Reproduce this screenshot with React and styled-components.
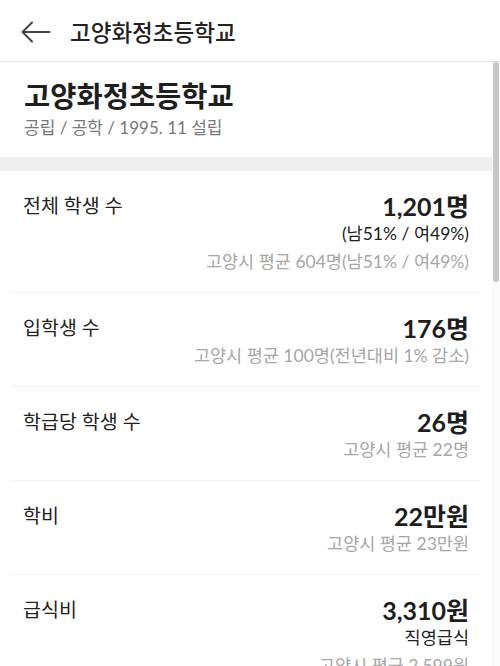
import styled, { createGlobalStyle } from "styled-components"

const GlobalStyle = createGlobalStyle`
    html, body {
        margin: 0;
        padding: 0;
        height: 100%;
        background: #fff;
    }
    body {
        font-family: Lato, "Noto Sans CJK KR", sans-serif;
        color: #222;
    }
    #root {
        height: 100%;
    }
`

const stats = [
    {
        label: "전체 학생 수",
        value: "1,201명",
        sub: "(남51% / 여49%)",
        avg: "고양시 평균 604명(남51% / 여49%)",
    },
    { label: "입학생 수", value: "176명", avg: "고양시 평균 100명(전년대비 1% 감소)" },
    { label: "학급당 학생 수", value: "26명", avg: "고양시 평균 22명" },
    { label: "학비", value: "22만원", avg: "고양시 평균 23만원" },
    { label: "급식비", value: "3,310원", sub: "직영급식", avg: "고양시 평균 2,599원" },
]

const moreStats = [
    { label: "교원 1인당 학생 수", value: "18.2명", avg: "고양시 평균 15.4명" },
    { label: "학급 수", value: "46개", avg: "고양시 평균 27개" },
    { label: "방과후학교 참여율", value: "64%", avg: "고양시 평균 58%" },
    { label: "졸업생 수", value: "198명", avg: "고양시 평균 97명" },
    { label: "교지 면적", value: "12,540㎡", avg: "고양시 평균 10,212㎡" },
    { label: "도서관 장서 수", value: "21,480권", avg: "고양시 평균 15,903권" },
    { label: "돌봄교실 수", value: "4실", avg: "고양시 평균 3실" },
]

const BackIcon = () => (
    <svg width="30" height="22" viewBox="0 0 30 22" fill="none">
        <path
            d="M1.5 11 H28.5 M11 1.5 L1.5 11 L11 20.5"
            stroke="#444"
            strokeWidth="2"
            strokeLinecap="round"
            strokeLinejoin="round"
        />
    </svg>
)

const StatRow = ({ label, value, sub, avg }) => (
    <Row>
        <Label>{label}</Label>
        <Values>
            <Value>{value}</Value>
            {sub && <Sub>{sub}</Sub>}
            <Avg>{avg}</Avg>
        </Values>
    </Row>
)

const App = () => {
    return (
        <Page>
            <GlobalStyle />
            <Header>
                <BackButton>
                    <BackIcon />
                </BackButton>
                <HeaderTitle>고양화정초등학교</HeaderTitle>
            </Header>
            <Body>
                <Scroller>
                    <Intro>
                        <SchoolName>고양화정초등학교</SchoolName>
                        <SchoolMeta>공립 / 공학 / 1995. 11 설립</SchoolMeta>
                    </Intro>
                    <Band />
                    <List>
                        {stats.map(s => (
                            <StatRow key={s.label} {...s} />
                        ))}
                    </List>
                    <Band />
                    <List>
                        {moreStats.map(s => (
                            <StatRow key={s.label} {...s} />
                        ))}
                    </List>
                </Scroller>
                <ScrollTrack>
                    <ScrollThumb />
                </ScrollTrack>
            </Body>
        </Page>
    )
}

const Page = styled.div`
    display: flex;
    flex-direction: column;
    height: 100vh;
    overflow: hidden;
`

const Header = styled.header`
    flex: none;
    display: flex;
    align-items: center;
    height: 61px;
    border-bottom: 1px solid #e2e2e2;
    padding: 0 0 0 21px;
    gap: 19px;
`

const BackButton = styled.button`
    display: flex;
    align-items: center;
    border: none;
    background: none;
    padding: 0;
    margin-top: 2px;
    cursor: pointer;
`

const HeaderTitle = styled.h1`
    margin: 0;
    font-size: 22.5px;
    font-weight: 500;
    color: #222;
`

const Body = styled.div`
    flex: 1;
    display: flex;
    min-height: 0;
`

const Scroller = styled.main`
    flex: 1;
    overflow-y: hidden;
`

const ScrollTrack = styled.div`
    flex: none;
    width: 8px;
    background: #fafafa;
    display: flex;
    flex-direction: column;
`

const ScrollThumb = styled.div`
    height: 220px;
    margin: 0 1px;
    border-radius: 3px;
    background: #c6c6c6;
`

const Intro = styled.section`
    padding: 17px 24px 17px;
`

const SchoolName = styled.h2`
    margin: 0;
    font-size: 28.5px;
    line-height: 34px;
    font-weight: 700;
    color: #1e1e1e;
`

const SchoolMeta = styled.p`
    margin: 3px 0 0;
    font-size: 17px;
    line-height: 24px;
    color: #777;
`

const Band = styled.div`
    height: 14px;
    background: #efefef;
`

const List = styled.div`
    padding: 0 12px;
`

const Row = styled.div`
    display: flex;
    justify-content: space-between;
    align-items: flex-start;
    padding: 20px 11px 17px;
    border-top: 1px solid #f0f0f0;

    &:first-child {
        border-top: none;
    }
`

const Label = styled.div`
    font-size: 19.5px;
    line-height: 30px;
    color: #222;
`

const Values = styled.div`
    display: flex;
    flex-direction: column;
    align-items: flex-end;
    text-align: right;
`

const Value = styled.div`
    font-size: 25px;
    line-height: 30px;
    font-weight: 700;
    color: #1e1e1e;
`

const Sub = styled.div`
    font-size: 17.5px;
    line-height: 26px;
    margin-bottom: 2px;
    color: #222;
`

const Avg = styled.div`
    font-size: 17.5px;
    line-height: 26px;
    color: #a6a6a6;
`

export default App
